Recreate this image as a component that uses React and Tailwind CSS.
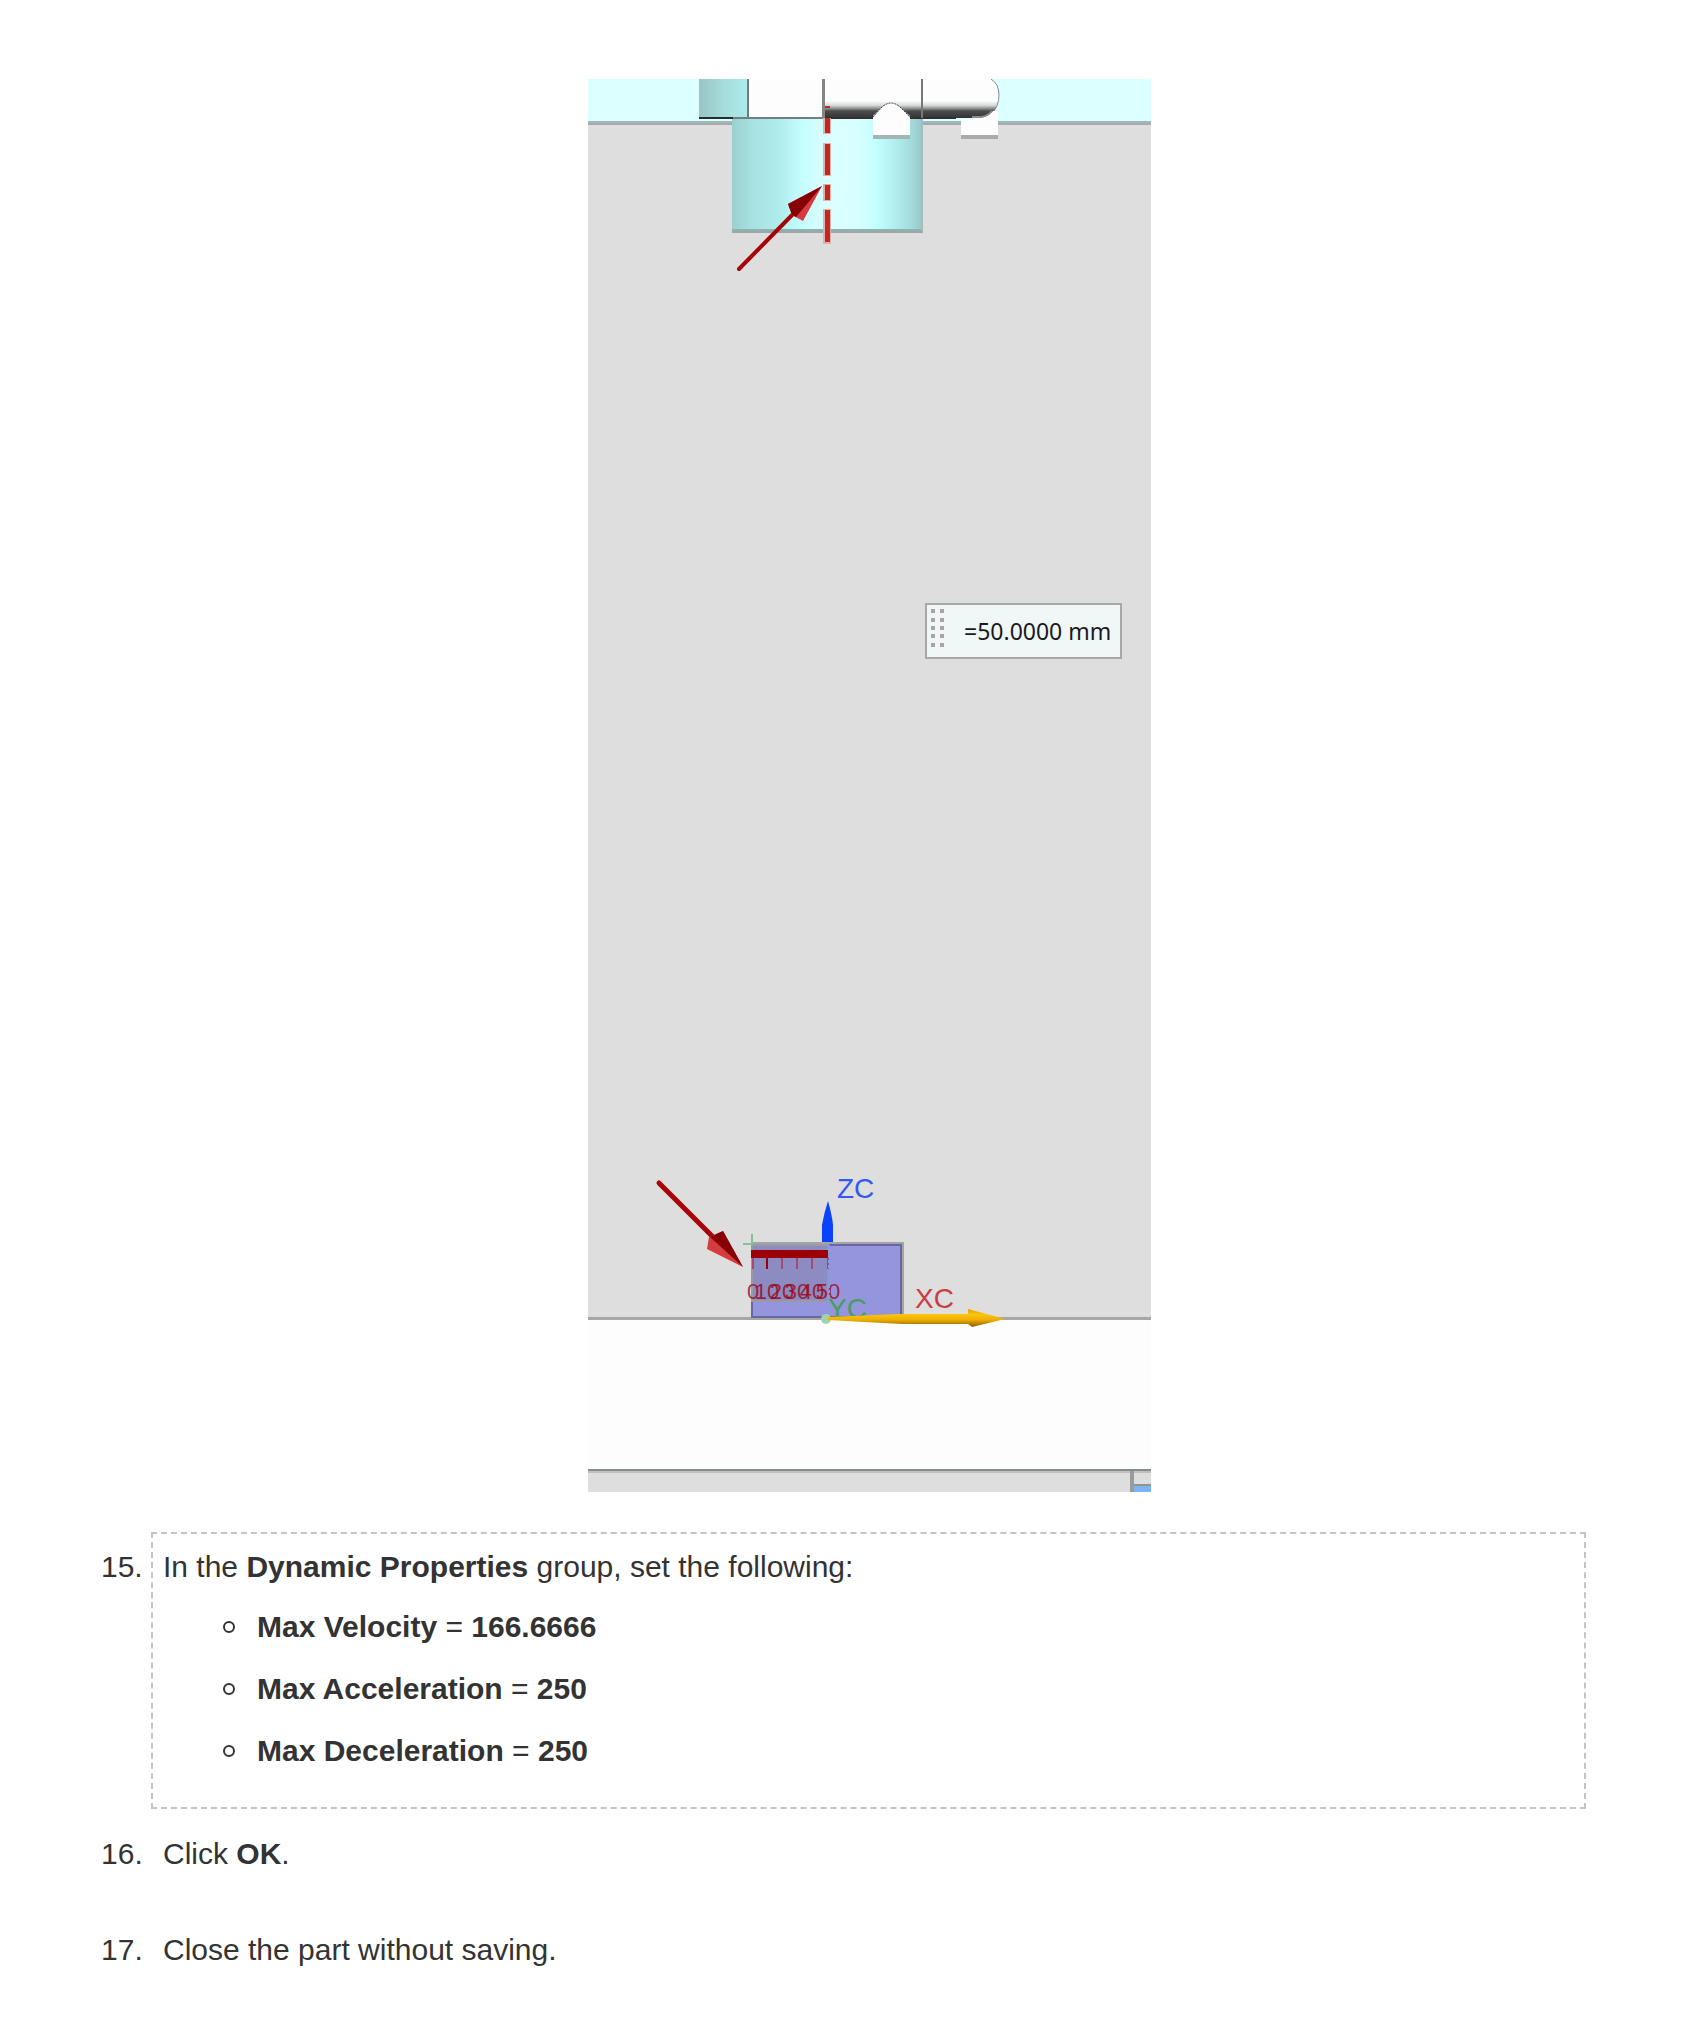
import React from "react";

const ticks = [
  { x: 164, label: "0" },
  { x: 178, label: "10" },
  { x: 193, label: "20" },
  { x: 208, label: "30" },
  { x: 223, label: "40" },
  { x: 239, label: "50" },
];

const gripRows = [530, 539, 547, 555, 564];

const properties = [
  { name: "Max Velocity", value: "166.6666" },
  { name: "Max Acceleration", value: "250" },
  { name: "Max Deceleration", value: "250" },
];

function ModelView() {
  return (
    <svg
      viewBox="0 0 563 1413"
      className="block w-[563px] max-w-full"
      role="img"
      aria-label="Front view of the model with a 50 mm limit"
    >
      <defs>
        <linearGradient id="cylinder">
          <stop offset="0" stopColor="#9cd0d0" />
          <stop offset="0.1" stopColor="#a6e0e0" />
          <stop offset="0.25" stopColor="#b0ecec" />
          <stop offset="0.36" stopColor="#c4fcfc" />
          <stop offset="0.5" stopColor="#dcffff" />
          <stop offset="0.65" stopColor="#d8ffff" />
          <stop offset="0.76" stopColor="#c4ffff" />
          <stop offset="0.86" stopColor="#b0eeee" />
          <stop offset="0.94" stopColor="#a4dcdc" />
          <stop offset="1" stopColor="#98c8c8" />
        </linearGradient>
        <linearGradient id="flange">
          <stop offset="0" stopColor="#98c4c4" />
          <stop offset="0.5" stopColor="#a6dcdc" />
          <stop offset="1" stopColor="#acecec" />
        </linearGradient>
        <linearGradient id="pipe" gradientUnits="userSpaceOnUse" x1="0" y1="0" x2="0" y2="40">
          <stop offset="0.55" stopColor="#fdfdfd" />
          <stop offset="0.66" stopColor="#d4dada" />
          <stop offset="0.74" stopColor="#8c8c8c" />
          <stop offset="0.8" stopColor="#4c4c4c" />
          <stop offset="1" stopColor="#303030" />
        </linearGradient>
        <linearGradient id="gold" x1="0" y1="0" x2="0" y2="1">
          <stop offset="0" stopColor="#dca400" />
          <stop offset="0.3" stopColor="#fcc40c" />
          <stop offset="0.6" stopColor="#eeb000" />
          <stop offset="1" stopColor="#8c5800" />
        </linearGradient>
      </defs>

      <rect width="563" height="1413" fill="#dedede" />
      <rect width="563" height="42" fill="#dcffff" />
      <rect y="42" width="563" height="2" fill="#9dbbbb" />
      <rect y="44" width="563" height="2" fill="#aaaaaa" />

      <rect x="144" y="40" width="190" height="111" fill="url(#cylinder)" />
      <rect x="144" y="150" width="191" height="2" fill="#88b4b4" />
      <rect x="144" y="152" width="191" height="2" fill="#a4a4a4" />
      <rect x="333" y="40" width="2" height="112" fill="#a8bcbc" />

      <rect x="111" width="49" height="39" fill="url(#flange)" />
      <rect x="160" width="76" height="39" fill="#fdfdfd" />
      <rect x="159" width="2" height="39" fill="#707c7c" />
      <rect x="111" y="38" width="34" height="2" fill="#242c2c" />
      <rect x="145" y="38" width="91" height="2" fill="#6e8080" />

      <path d="M236 0H404Q411 6 411 16Q411 30 402 36Q397 39 390 39H236Z" fill="url(#pipe)" />
      <path d="M403 0Q411 5 411 16Q411 28 403 35" fill="none" stroke="#888" strokeWidth="1" />
      <rect x="236" y="38" width="132" height="2" fill="#303030" />
      <rect x="333" width="2" height="39" fill="#777" />
      <rect x="234" width="3" height="39" fill="#858585" />

      <path d="M285 56V37L294 28Q303 21 312 28L322 37V56Z" fill="#fdfdfd" />
      <path d="M285 38L294 28Q303 20 312 28L322 38" fill="none" stroke="#444" strokeWidth="1" strokeDasharray="2 1" />
      <rect x="285" y="56" width="37" height="4" fill="#a2b6b6" />
      <path d="M373 40H384Q398 40 405 32H410V56H373Z" fill="#fdfdfd" />
      <path d="M384 38H393Q400 37 404 32" fill="none" stroke="#8c8c8c" strokeWidth="2" />
      <rect x="373" y="56" width="37" height="4" fill="#aaaaaa" />

      <g fill="#e2b0ac">
        <rect x="235" y="39" width="8" height="16" />
        <rect x="235" y="64" width="8" height="33" />
        <rect x="235" y="105" width="8" height="17" />
        <rect x="235" y="130" width="8" height="35" />
      </g>
      <g fill="#be2a20">
        <rect x="237" y="27" width="5" height="2" />
        <rect x="237" y="39" width="5" height="15" />
        <rect x="237" y="65" width="5" height="31" />
        <rect x="237" y="106" width="5" height="15" />
        <rect x="237" y="131" width="5" height="32" />
      </g>

      <path d="M151 190L208 132" stroke="#a50508" strokeWidth="4" strokeLinecap="round" />
      <path d="M234 107L200 125L204 136L215 142Z" fill="#d43c3e" />
      <path d="M234 107L200 125L204 136L208 138Z" fill="#860006" />

      <rect x="338" y="525" width="195" height="54" fill="#f0f7f7" stroke="#a8a8a8" strokeWidth="2" />
      <g fill="#a9a4a6">
        {gripRows.map((y) => (
          <React.Fragment key={y}>
            <rect x="343" y={y} width="4" height="4" />
            <rect x="352" y={y} width="4" height="4" />
          </React.Fragment>
        ))}
      </g>
      <text x="376" y="561" fontSize="23" fill="#1c1820" className="font-['Noto_Sans',sans-serif]">
        =50.0000 mm
      </text>

      <rect y="1240" width="563" height="151" fill="#fdfdfd" />
      <rect y="1238" width="563" height="3" fill="#a6a6a6" />
      <rect y="1390" width="563" height="2" fill="#888c88" />
      <rect y="1392" width="563" height="2" fill="#bec2be" />
      <rect x="542" y="1392" width="4" height="21" fill="#999b99" />
      <rect x="546" y="1405" width="17" height="2" fill="#929292" />
      <rect x="546" y="1407" width="17" height="6" fill="#7ab4f4" />

      <rect x="163" y="1164" width="150" height="75" fill="#9595de" />
      <path d="M163 1164H315V1238" fill="none" stroke="#a4a4a4" strokeWidth="2" />
      <path d="M240 1166H313V1238M164 1222V1238H312" fill="none" stroke="#6767a4" strokeWidth="2" />
      <rect x="164" y="1166" width="76" height="56" fill="#8c8cc2" stroke="#9a9aa6" strokeWidth="2" />
      <rect x="163" y="1171" width="77" height="8" fill="#9b0004" />
      <g fontSize="22" textAnchor="middle" fill="#9b0418" className="font-['Liberation_Sans',sans-serif]">
        {ticks.map(({ x, label }) => (
          <React.Fragment key={label}>
            <rect x={x} y="1179" width="2" height="11" fill={label === "10" ? "#9b0004" : "#a24a70"} />
            <text x={x + 1} y="1220" fillOpacity="0.8">
              {label}
            </text>
          </React.Fragment>
        ))}
      </g>
      <path d="M155 1165H164V1155" fill="none" stroke="#84c494" strokeWidth="2" />

      <path d="M71 1104L125 1158" stroke="#a50508" strokeWidth="5" strokeLinecap="round" />
      <path d="M155 1188L135 1152L121 1158L119 1170Z" fill="#d43c3e" />
      <path d="M155 1188L135 1152L122 1158Z" fill="#860006" />

      <path d="M240 1122Q244 1136 245 1146V1163H234V1146Q236 1134 240 1122Z" fill="#0b43fb" />
      <path d="M241 1166V1235" stroke="#7aa0f4" strokeWidth="2" strokeDasharray="3 2" />

      <g fontSize="28" className="font-['Liberation_Sans',sans-serif]">
        <text x="249" y="1119" fill="#3458f4">ZC</text>
        <text x="327" y="1229" fill="#cc3c40">XC</text>
        <text x="240" y="1239" fill="#4a9c62">YC</text>
      </g>

      <circle cx="238" cy="1240" r="5" fill="#a0d2ac" />
      <path d="M240 1238L310 1235H380V1230L417 1240L384 1248L380 1245H314L240 1241Z" fill="url(#gold)" />
    </svg>
  );
}

function Step({ number, children }) {
  return (
    <li className="flex">
      <span className="w-[50px] shrink-0">{number}.</span>
      <div className="min-w-0 flex-1 pl-3">{children}</div>
    </li>
  );
}

export default function App() {
  return (
    <main className="bg-white pt-[79px] pr-[105px] pb-[54px] pl-[101px] font-['Liberation_Sans',Arial,sans-serif] text-[30px] leading-[40px] text-[#333333]">
      <figure className="flex justify-center pl-[51px]">
        <ModelView />
      </figure>
      <ol className="mt-10">
        <li className="mb-[25px] flex">
          <span className="w-[50px] shrink-0 pt-[15px]">15.</span>
          <div className="min-w-0 flex-1 border-2 border-dashed border-[#c4c4c4] pt-[13px] pb-9 pl-[10px]">
            <p>
              In the <strong>Dynamic Properties</strong> group, set the following:
            </p>
            <ul className="mt-5 flex flex-col gap-[22px] pl-[60px]">
              {properties.map(({ name, value }) => (
                <li key={name} className="flex items-center">
                  <span className="mr-[22px] size-3 shrink-0 rounded-full border-2 border-[#333333]" />
                  <span>
                    <strong>{name}</strong> = <strong>{value}</strong>
                  </span>
                </li>
              ))}
            </ul>
          </div>
        </li>
        <Step number={16}>
          <p className="mb-14">
            Click <strong>OK</strong>.
          </p>
        </Step>
        <Step number={17}>Close the part without saving.</Step>
      </ol>
    </main>
  );
}
